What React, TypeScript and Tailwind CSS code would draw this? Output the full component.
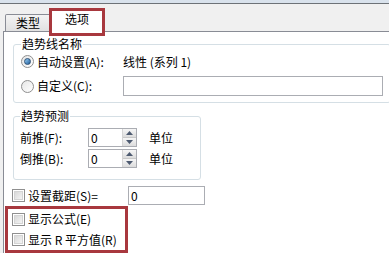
import React from "react";

const font = { fontFamily: '"Noto Sans CJK SC", "Liberation Sans", sans-serif' };

function Radio({ checked }: { checked?: boolean }) {
  return (
    <span className="relative flex h-[13px] w-[13px] shrink-0 items-center justify-center rounded-full border border-[#8f8f8f] bg-gradient-to-br from-[#e6e6e6] to-[#ffffff]">
      {checked && (
        <span className="h-[7px] w-[7px] rounded-full border border-[#2b4f75] bg-gradient-to-br from-[#9ad0f5] to-[#1d5d9a]" />
      )}
    </span>
  );
}

function Check() {
  return (
    <span className="flex h-[13px] w-[13px] shrink-0 items-center justify-center border border-[#8f8f8f] bg-white">
      <span className="h-[9px] w-[9px] border border-[#d4d4d4] bg-gradient-to-br from-[#d9d9d9] to-[#f4f4f4]" />
    </span>
  );
}

function Spin({ value }: { value: string }) {
  return (
    <div className="flex h-[19px] w-[49px] border border-[#abadb3] bg-white">
      <span className="flex-1 pl-[2px] text-[12px] leading-[17px]">{value}</span>
      <div className="flex w-[14px] flex-col border-l border-[#d5d5d5]">
        <span className="flex h-1/2 items-center justify-center border-b border-[#c8c8c8] bg-gradient-to-b from-[#f6f6f6] to-[#dcdcdc]">
          <svg width="7" height="4" viewBox="0 0 7 4"><path d="M0 4 L3.5 0 L7 4 Z" fill="#4d5a70" /></svg>
        </span>
        <span className="flex h-1/2 items-center justify-center bg-gradient-to-b from-[#f6f6f6] to-[#dcdcdc]">
          <svg width="7" height="4" viewBox="0 0 7 4"><path d="M0 0 L3.5 4 L7 0 Z" fill="#4d5a70" /></svg>
        </span>
      </div>
    </div>
  );
}

export default function App() {
  return (
    <div className="relative flex h-[253px] w-[389px] flex-col overflow-hidden bg-[#f0f0f0] text-[12px] text-black" style={font}>
      {/* window top edge */}
      <div className="h-[3px] bg-[#d9e2ec]" />
      <div className="h-px bg-[#6d7277]" />

      {/* tabs */}
      <div className="flex h-[28px] items-end pl-[5px]">
        <div className="flex h-[17px] w-[46px] items-center justify-center rounded-t-[2px] border border-b-0 border-[#898c95] bg-gradient-to-b from-[#f3f3f3] to-[#e1e1e1] leading-none">
          类型
        </div>
        <div className="relative z-10 -mb-px flex h-[23px] w-[52px] items-start justify-center rounded-t-[2px] border border-b-0 border-[#898c95] bg-white pt-[3px] leading-none">
          选项
        </div>
      </div>

      {/* panel */}
      <div className="ml-[3px] flex flex-1 flex-col border-l border-t border-[#898c95] bg-white">
        <fieldset className="ml-[9px] mt-[5px] h-[66px] w-[374px] rounded-[3px] border border-[#d5dfe5] px-[7px]">
          <legend className="px-[1px] leading-[14px]">趋势线名称</legend>
          <div className="flex h-[21px] items-center">
            <Radio checked />
            <span className="ml-[3px] w-[86px]">自动设置(A):</span>
            <span>线性 (系列 1)</span>
          </div>
          <div className="mt-[4px] flex h-[20px] items-center">
            <Radio />
            <span className="ml-[3px] w-[86px]">自定义(C):</span>
            <div className="h-[20px] w-[260px] border border-[#abadb3] bg-white" />
          </div>
        </fieldset>

        <fieldset className="ml-[9px] mt-[6px] h-[71px] w-[188px] rounded-[3px] border border-[#d5dfe5] px-[6px]">
          <legend className="px-[1px] leading-[14px]">趋势预测</legend>
          <div className="mt-[5px] flex h-[19px] items-center">
            <span className="w-[68px]">前推(F):</span>
            <Spin value="0" />
            <span className="ml-[12px]">单位</span>
          </div>
          <div className="mt-[2px] flex h-[19px] items-center">
            <span className="w-[68px]">倒推(B):</span>
            <Spin value="0" />
            <span className="ml-[12px]">单位</span>
          </div>
        </fieldset>

        <div className="ml-[8px] mt-[6px] flex h-[19px] items-center">
          <Check />
          <span className="ml-[3px] w-[100px]">设置截距(S)=</span>
          <div className="h-[19px] w-[77px] border border-[#abadb3] bg-white pl-[2px] leading-[17px]">0</div>
        </div>

        <div className="ml-[1px] mt-[1px] flex h-[47px] w-[123px] flex-col border-[3px] border-[#a8383e] pl-[4px]">
          <div className="flex h-[20px] items-center">
            <Check />
            <span className="ml-[3px]">显示公式(E)</span>
          </div>
          <div className="flex h-[21px] items-center">
            <Check />
            <span className="ml-[3px]">显示 R 平方值(R)</span>
          </div>
        </div>
      </div>

      {/* highlight around the selected tab */}
      <div className="pointer-events-none absolute left-[49px] top-[8px] z-20 h-[28px] w-[56px] border-[3px] border-[#a8383e]" />
    </div>
  );
}
